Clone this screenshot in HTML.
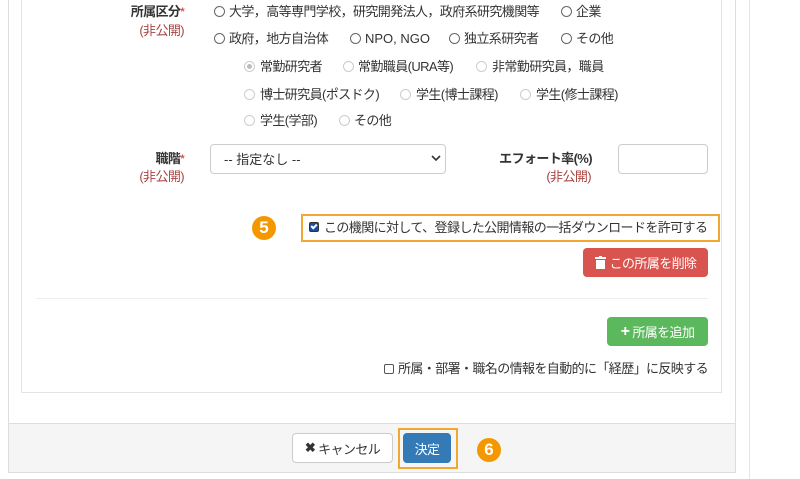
<!DOCTYPE html>
<html><head><meta charset="utf-8"><style>
*{box-sizing:border-box;margin:0;padding:0}
body{width:800px;height:479px;overflow:hidden;background:#fff;font-family:"Liberation Sans","Noto Sans CJK JP",sans-serif;font-size:13px;letter-spacing:-0.6px;color:#333;position:relative}
.a{position:absolute;white-space:nowrap;line-height:16px}
.r{position:absolute;width:11px;height:11px;border:1px solid #666;border-radius:50%;background:#fff}
.rd{border-color:#ccc}
.lab{font-weight:bold;text-align:right}
.red{color:#a94442}
.star{color:#d9534f;font-size:11px;vertical-align:top}
.btn{position:absolute;border-radius:4px;color:#fff;font-size:13px;display:flex;align-items:center;justify-content:center}
.circ{position:absolute;width:24px;height:24px;border-radius:50%;background:#f39800;color:#fff;font-weight:bold;font-size:17px;display:flex;align-items:center;justify-content:center;letter-spacing:0}
</style></head><body>
<div style="position:absolute;left:8px;top:-2px;width:728px;height:475px;border:1px solid #ddd;border-top:none"></div>
<div style="position:absolute;left:749px;top:0;width:1px;height:479px;background:#e5e5e5"></div>
<div style="position:absolute;left:21px;top:-2px;width:701px;height:395px;border:1px solid #e3e3e3"></div>
<div style="position:absolute;left:9px;top:423px;width:726px;height:49px;background:#f5f5f5;border-top:1px solid #ddd"></div>

<div class="a lab" style="left:100px;top:4px;width:84px">所属区分<span class="star">*</span></div>
<div class="a red" style="left:100px;top:23px;width:84px;text-align:right">(非公開)</div>

<div class="r" style="left:214px;top:6px"></div><div class="a" style="left:229px;top:4px">大学，高等専門学校，研究開発法人，政府系研究機関等</div>
<div class="r" style="left:561px;top:6px"></div><div class="a" style="left:576px;top:4px">企業</div>
<div class="r" style="left:214px;top:33px"></div><div class="a" style="left:229px;top:31px">政府，地方自治体</div>
<div class="r" style="left:350px;top:33px"></div><div class="a" style="left:365px;top:31px;letter-spacing:0">NPO, NGO</div>
<div class="r" style="left:449px;top:33px"></div><div class="a" style="left:464px;top:31px">独立系研究者</div>
<div class="r" style="left:561px;top:33px"></div><div class="a" style="left:576px;top:31px">その他</div>

<div class="r rd" style="left:244px;top:61px"><div style="width:5px;height:5px;border-radius:50%;background:#bbb;margin:2px"></div></div><div class="a" style="left:260px;top:59px">常勤研究者</div>
<div class="r rd" style="left:343px;top:61px"></div><div class="a" style="left:358px;top:59px">常勤職員(URA等)</div>
<div class="r rd" style="left:476px;top:61px"></div><div class="a" style="left:492px;top:59px">非常勤研究員，職員</div>
<div class="r rd" style="left:244px;top:89px"></div><div class="a" style="left:260px;top:87px">博士研究員(ポスドク)</div>
<div class="r rd" style="left:400px;top:89px"></div><div class="a" style="left:416px;top:87px">学生(博士課程)</div>
<div class="r rd" style="left:520px;top:89px"></div><div class="a" style="left:536px;top:87px">学生(修士課程)</div>
<div class="r rd" style="left:244px;top:115px"></div><div class="a" style="left:260px;top:113px">学生(学部)</div>
<div class="r rd" style="left:339px;top:115px"></div><div class="a" style="left:354px;top:113px">その他</div>

<div class="a lab" style="left:100px;top:151px;width:84px">職階<span class="star">*</span></div>
<div class="a red" style="left:100px;top:169px;width:84px;text-align:right">(非公開)</div>
<div style="position:absolute;left:210px;top:144px;width:236px;height:30px;border:1px solid #ccc;border-radius:4px"></div>
<div class="a" style="left:224px;top:152px;letter-spacing:0">-- 指定なし --</div>
<svg style="position:absolute;left:431px;top:155px" width="10" height="7"><path d="M1 1 L5 5 L9 1" stroke="#333" stroke-width="1.6" fill="none"/></svg>
<div class="a lab" style="left:480px;top:151px;width:112px">エフォート率(%)</div>
<div class="a red" style="left:530px;top:169px;width:61px;text-align:right">(非公開)</div>
<div style="position:absolute;left:618px;top:144px;width:90px;height:30px;border:1px solid #ccc;border-radius:4px"></div>

<div class="circ" style="left:252px;top:216px">5</div>
<div style="position:absolute;left:301px;top:214px;width:419px;height:28px;border:2px solid #f0a830"></div>
<div style="position:absolute;left:309px;top:222px;width:10px;height:10px;background:#1a4fa0;border:1px solid #333;border-radius:2px"><div style="position:absolute;left:2px;top:0px;width:4px;height:6px;border:solid #fff;border-width:0 2px 2px 0;transform:rotate(45deg)"></div></div>
<div class="a" style="left:324px;top:220px">この機関に対して、登録した公開情報の一括ダウンロードを許可する</div>

<div class="btn" style="left:583px;top:248px;width:125px;height:29px;background:#d9534f"><svg width="11" height="13" style="margin-right:4px"><rect x="0" y="1" width="11" height="2" fill="#fff"/><rect x="4" y="0" width="3" height="2" fill="#fff"/><rect x="1" y="4" width="9" height="9" fill="#fff"/></svg>この所属を削除</div>
<div style="position:absolute;left:36px;top:298px;width:672px;height:1px;background:#eee"></div>
<div class="btn" style="left:607px;top:317px;width:101px;height:29px;background:#5cb85c"><b style="font-size:16px;margin-right:3px">+</b>所属を追加</div>
<div style="position:absolute;left:384px;top:364px;width:10px;height:10px;border:1px solid #555;border-radius:2px"></div>
<div class="a" style="left:398px;top:361px">所属・部署・職名の情報を自動的に「経歴」に反映する</div>

<div class="btn" style="left:292px;top:433px;width:101px;height:30px;background:#fff;border:1px solid #ccc;color:#333"><b style="margin-right:3px">✖</b>キャンセル</div>
<div style="position:absolute;left:398px;top:428px;width:60px;height:41px;border:2px solid #f0a830"></div>
<div class="btn" style="left:403px;top:433px;width:48px;height:30px;background:#337ab7">決定</div>
<div class="circ" style="left:477px;top:438px">6</div>
</body></html>
